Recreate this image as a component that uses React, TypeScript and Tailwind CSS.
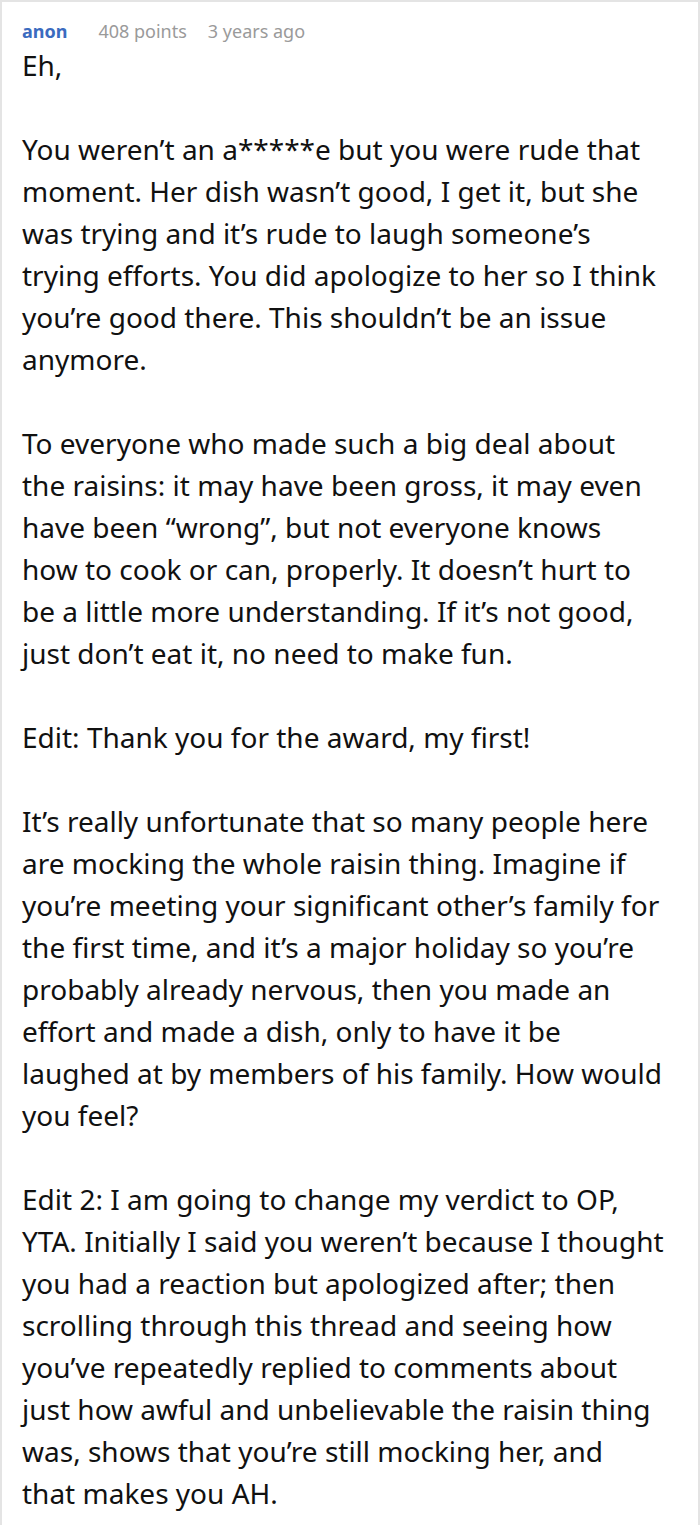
import React from "react";

const paragraphs = [
  "Eh,",
  "You weren’t an a*****e but you were rude that moment. Her dish wasn’t good, I get it, but she was trying and it’s rude to laugh someone’s trying efforts. You did apologize to her so I think you’re good there. This shouldn’t be an issue anymore.",
  "To everyone who made such a big deal about the raisins: it may have been gross, it may even have been “wrong”, but not everyone knows how to cook or can, properly. It doesn’t hurt to be a little more understanding. If it’s not good, just don’t eat it, no need to make fun.",
  "Edit: Thank you for the award, my first!",
  "It’s really unfortunate that so many people here are mocking the whole raisin thing. Imagine if you’re meeting your significant other’s family for the first time, and it’s a major holiday so you’re probably already nervous, then you made an effort and made a dish, only to have it be laughed at by members of his family. How would you feel?",
  "Edit 2: I am going to change my verdict to OP, YTA. Initially I said you weren’t because I thought you had a reaction but apologized after; then scrolling through this thread and seeing how you’ve repeatedly replied to comments about just how awful and unbelievable the raisin thing was, shows that you’re still mocking her, and that\u00a0makes you AH.",
];

export default function App() {
  return (
    <div className="bg-white font-['Noto_Sans',sans-serif]">
      {/* comment card */}
      <div className="min-h-[1525px] border-2 border-[#e4e4e4] pl-[20px] pr-[34px] pt-[16px] pb-[20px]">
        <div className="flex items-center gap-[31px] text-[18px] leading-[26px]">
          <span className="font-bold text-[#3b6bbf]">anon</span>
          <div className="flex gap-[21px] text-[#9a9a9a]">
            <span>408 points</span>
            <span>3 years ago</span>
          </div>
        </div>
        <div className="flex flex-col gap-[42px] text-[28px] leading-[42px] text-[#111]">
          {paragraphs.map((p, i) => (
            <p key={i}>{p}</p>
          ))}
        </div>
      </div>
    </div>
  );
}
